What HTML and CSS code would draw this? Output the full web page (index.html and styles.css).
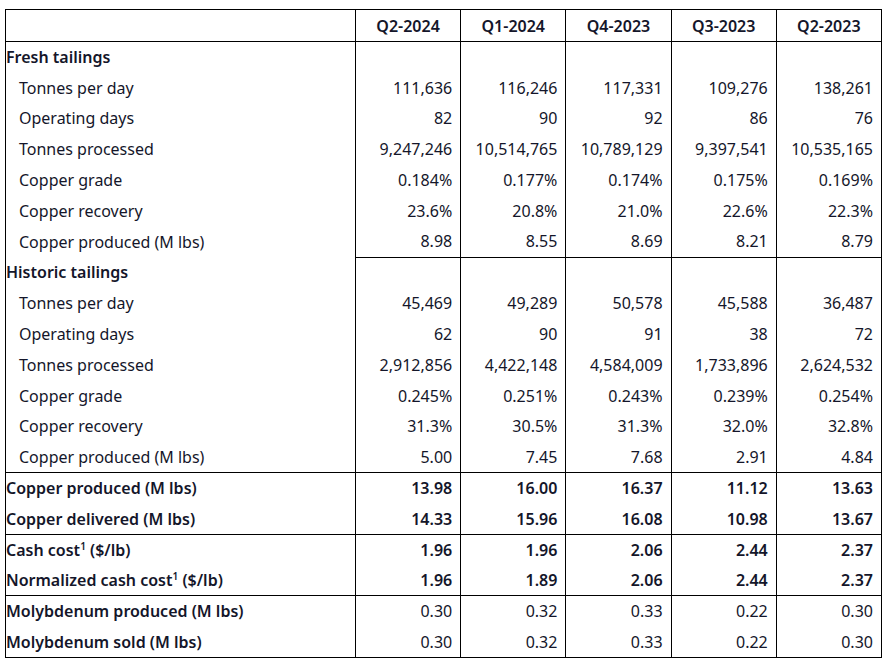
FILE: index.html
```html
<!DOCTYPE html>
<html>
<head>
<meta charset="utf-8">
<link rel="stylesheet" href="styles.css">
</head>
<body>
<table class="ops">
  <colgroup>
    <col class="c-label"><col class="c-num"><col class="c-num"><col class="c-num"><col class="c-num"><col class="c-num">
  </colgroup>
  <thead>
    <tr class="head"><th></th><th>Q2-2024</th><th>Q1-2024</th><th>Q4-2023</th><th>Q3-2023</th><th>Q2-2023</th></tr>
  </thead>
  <tbody>
    <tr class="section"><td class="lbl">Fresh tailings</td><td></td><td></td><td></td><td></td><td></td></tr>
    <tr><td class="lbl sub">Tonnes per day</td><td>111,636</td><td>116,246</td><td>117,331</td><td>109,276</td><td>138,261</td></tr>
    <tr><td class="lbl sub">Operating days</td><td>82</td><td>90</td><td>92</td><td>86</td><td>76</td></tr>
    <tr><td class="lbl sub">Tonnes processed</td><td>9,247,246</td><td>10,514,765</td><td>10,789,129</td><td>9,397,541</td><td>10,535,165</td></tr>
    <tr><td class="lbl sub">Copper grade</td><td>0.184%</td><td>0.177%</td><td>0.174%</td><td>0.175%</td><td>0.169%</td></tr>
    <tr><td class="lbl sub">Copper recovery</td><td>23.6%</td><td>20.8%</td><td>21.0%</td><td>22.6%</td><td>22.3%</td></tr>
    <tr class="split"><td class="lbl sub">Copper produced (M lbs)</td><td>8.98</td><td>8.55</td><td>8.69</td><td>8.21</td><td>8.79</td></tr>
    <tr class="section"><td class="lbl">Historic tailings</td><td></td><td></td><td></td><td></td><td></td></tr>
    <tr><td class="lbl sub">Tonnes per day</td><td>45,469</td><td>49,289</td><td>50,578</td><td>45,588</td><td>36,487</td></tr>
    <tr><td class="lbl sub">Operating days</td><td>62</td><td>90</td><td>91</td><td>38</td><td>72</td></tr>
    <tr><td class="lbl sub">Tonnes processed</td><td>2,912,856</td><td>4,422,148</td><td>4,584,009</td><td>1,733,896</td><td>2,624,532</td></tr>
    <tr><td class="lbl sub">Copper grade</td><td>0.245%</td><td>0.251%</td><td>0.243%</td><td>0.239%</td><td>0.254%</td></tr>
    <tr><td class="lbl sub">Copper recovery</td><td>31.3%</td><td>30.5%</td><td>31.3%</td><td>32.0%</td><td>32.8%</td></tr>
    <tr class="rule"><td class="lbl sub">Copper produced (M lbs)</td><td>5.00</td><td>7.45</td><td>7.68</td><td>2.91</td><td>4.84</td></tr>
    <tr class="bold"><td class="lbl">Copper produced (M lbs)</td><td>13.98</td><td>16.00</td><td>16.37</td><td>11.12</td><td>13.63</td></tr>
    <tr class="bold rule"><td class="lbl">Copper delivered (M lbs)</td><td>14.33</td><td>15.96</td><td>16.08</td><td>10.98</td><td>13.67</td></tr>
    <tr class="bold"><td class="lbl">Cash cost<sup>1</sup> ($/lb)</td><td>1.96</td><td>1.96</td><td>2.06</td><td>2.44</td><td>2.37</td></tr>
    <tr class="bold rule"><td class="lbl">Normalized cash cost<sup>1</sup> ($/lb)</td><td>1.96</td><td>1.89</td><td>2.06</td><td>2.44</td><td>2.37</td></tr>
    <tr class="mixed"><td class="lbl">Molybdenum produced (M lbs)</td><td>0.30</td><td>0.32</td><td>0.33</td><td>0.22</td><td>0.30</td></tr>
    <tr class="mixed"><td class="lbl">Molybdenum sold (M lbs)</td><td>0.30</td><td>0.32</td><td>0.33</td><td>0.22</td><td>0.30</td></tr>
  </tbody>
</table>
</body>
</html>
```
FILE: styles.css
```css
html, body {
  margin: 0;
  padding: 0;
  background: #ffffff;
}
body {
  padding: 9px 0 0 5px;
  font-family: "Noto Sans", "Open Sans", sans-serif;
  font-size: 16px;
  color: #14162a;
}
.ops {
  border-collapse: collapse;
  width: 876px;
  table-layout: fixed;
  border: 1px solid #000;
}
.c-label { width: 350px; }
.c-num { width: 105.2px; }
.ops th, .ops td {
  border-left: 1px solid #000;
  border-right: 1px solid #000;
  padding: 0 8px 0 0;
  text-align: right;
  white-space: nowrap;
  line-height: 20px;
}
.ops tr { height: 30.8px; }
.ops .head th {
  font-weight: 600;
  text-align: center;
  padding: 0;
  border-bottom: 1px solid #000;
  height: 31px;
}
.ops td.lbl {
  text-align: left;
  font-weight: 600;
}
.ops td.lbl.sub {
  font-weight: 400;
  padding-left: 13px;
}
.ops tr.bold td { font-weight: 600; }
.ops tr.split td { border-bottom: 1px solid #000; }
.ops tr.split td.lbl { border-bottom: none; }
.ops tr.rule td { border-bottom: 1px solid #000; }
.ops sup {
  font-size: 10px;
  line-height: 0;
  vertical-align: 6px;
}
```
